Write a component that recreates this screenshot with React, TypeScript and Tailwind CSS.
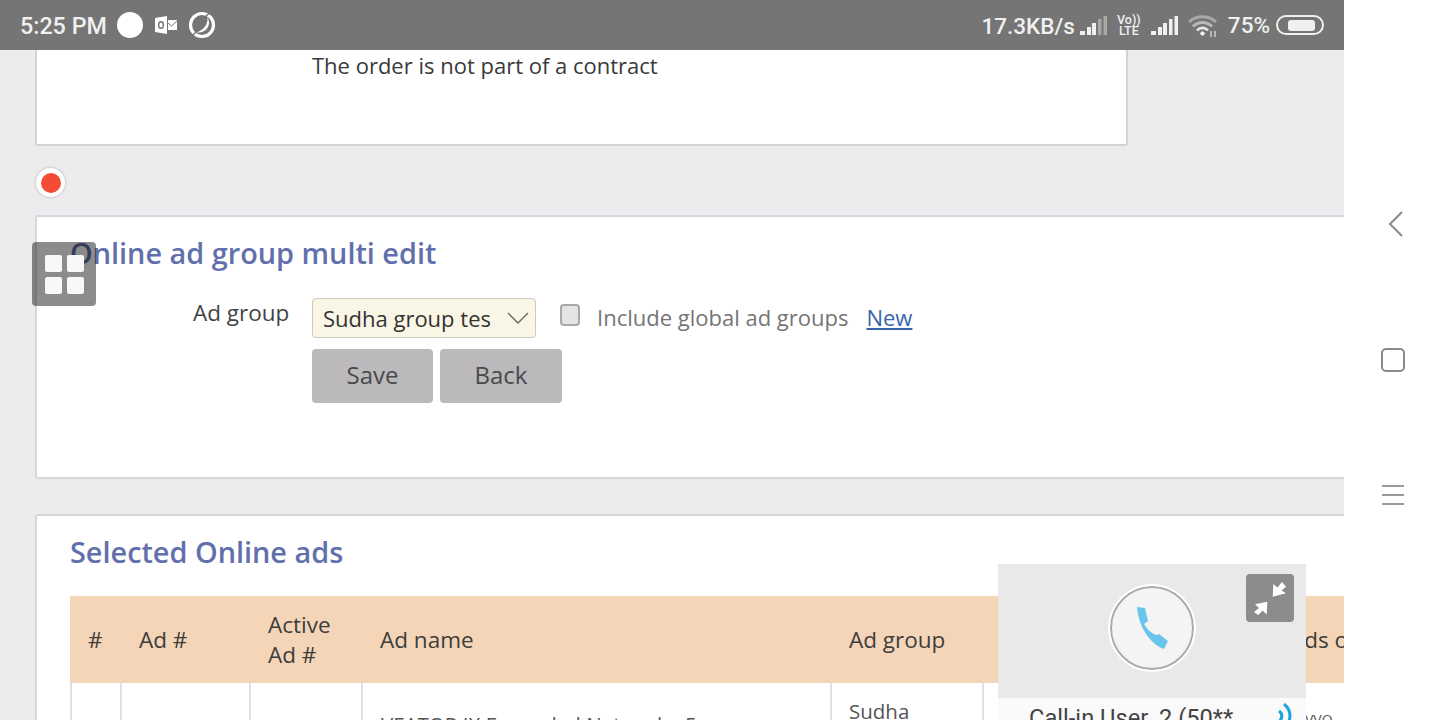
const openSans = "font-['Open_Sans',sans-serif]";

function SignalBars({ dim }: { dim?: boolean }) {
  const tail = dim ? "#a8a8a8" : "#f0f0f0";
  return (
    <svg width="28" height="20" viewBox="0 0 28 20">
      <rect x="0" y="15" width="5" height="4" fill="#f0f0f0" />
      <rect x="7" y="11" width="4" height="8" fill="#f0f0f0" />
      <rect x="12" y="7" width="4" height="12" fill="#f0f0f0" />
      <rect x="18" y="3" width="3.5" height="16" fill={tail} />
      <rect x="23.5" y="0" width="3.5" height="19" fill={tail} />
    </svg>
  );
}

function StatusBar() {
  return (
    <div className="h-[50px] shrink-0 bg-[#757575] flex items-center justify-between pl-5 pr-5 text-[#f0f0f0] font-['Roboto',sans-serif] font-medium text-[22.5px]">
      <div className="flex items-center">
        <span className="text-[23.3px] mt-[3px]">5:25 PM</span>
        <div className="ml-[10px] w-[26px] h-[26px] rounded-full bg-white" />
        <svg className="ml-[12px]" width="22" height="20" viewBox="0 0 22 20">
          <path d="M0 3 L12 1 V19 L0 17 Z" fill="#fff" />
          <ellipse cx="6" cy="10" rx="2.4" ry="3.2" fill="none" stroke="#757575" strokeWidth="1.4" />
          <path d="M13 5 H22 V15 H13 Z" fill="#fff" />
          <path d="M13 8 L16.5 11 L22 6" fill="none" stroke="#757575" strokeWidth="1" />
        </svg>
        <svg className="ml-[11px]" width="28" height="28" viewBox="0 0 28 28">
          <circle cx="14" cy="14" r="11.5" fill="none" stroke="#fff" strokeWidth="3.2" />
          <path d="M19.5 6.5 C24 14 18 22.5 8.5 21.5 C15 19.5 20 14 19.5 6.5 Z" fill="#fff" />
          <path d="M17 6 L22 1.5 M4 25 L8.5 20.5" stroke="#757575" strokeWidth="1.4" />
        </svg>
      </div>
      <div className="flex items-center">
        <span className="mt-[3px]">17.3KB/s</span>
        <div className="ml-[5px] mt-[2px]">
          <SignalBars dim />
        </div>
        <div className="ml-[9px] w-[24px] flex flex-col items-center text-[12.5px] leading-[11px] font-medium whitespace-nowrap">
          <span>Vo))</span>
          <span>LTE</span>
        </div>
        <div className="ml-[10px] mt-[2px]">
          <SignalBars />
        </div>
        <svg className="ml-[9px] mt-[2px]" width="30" height="22" viewBox="0 0 30 22">
          <path d="M1 7 C8 0 21 0 28 7" fill="none" stroke="#a8a8a8" strokeWidth="3" />
          <path d="M5 11.5 C10 6 19 6 24 11.5" fill="none" stroke="#b8b8b8" strokeWidth="3" />
          <path d="M9 15.5 C12 12 17 12 20 15.5" fill="none" stroke="#e8e8e8" strokeWidth="2.6" />
          <path d="M11.5 18.5 L14.5 16 L17.5 18.5 L14.5 21 Z" fill="#f0f0f0" />
          <path d="M23 22 V16 M27 22 V16" stroke="#d0d0d0" strokeWidth="1.5" />
        </svg>
        <span className="ml-[10px] mt-[2px]">75%</span>
        <div className="ml-[6px] w-[48px] h-[20px] rounded-full border-2 border-[#f0f0f0] flex items-center pl-[10px]">
          <div className="w-[27px] h-[11px] rounded-[3px] bg-[#f0f0f0]" />
        </div>
      </div>
    </div>
  );
}

const columns = [
  { label: "#", width: "w-[51px]" },
  { label: "Ad #", width: "w-[129px]" },
  { label: "Active Ad #", width: "w-[112px]" },
  { label: "Ad name", width: "w-[469px]" },
  { label: "Ad group", width: "w-[152px]" },
];

function AdsTable() {
  return (
    <div className="mt-[24px] w-[1400px] text-[#3d3d3d]">
      <div className="flex h-[87px] pt-[1px] bg-[#f4d5b8] text-[22.5px] leading-[30px]">
        {columns.map((c) => (
          <div key={c.label} className={`${c.width} pl-[18px] shrink-0 flex items-center`}>
            {c.label === "Active Ad #" ? (
              <span>
                Active
                <br />
                Ad #
              </span>
            ) : (
              c.label
            )}
          </div>
        ))}
        <div className="pl-[307px] flex items-center whitespace-nowrap">Ads o</div>
      </div>
      <div className="flex h-[60px] text-[20.5px] text-[#555]">
        <div className="w-[52px] shrink-0 border-x-2 border-[#e2e0e4]" />
        <div className="w-[129px] shrink-0 border-r-2 border-[#e2e0e4]" />
        <div className="w-[112px] shrink-0 border-r-2 border-[#e2e0e4]" />
        <div className="w-[469px] shrink-0 border-r-2 border-[#e2e0e4] pl-[18px] pt-[26px] whitespace-nowrap">
          VEATOR IX Expanded Network - 5
        </div>
        <div className="w-[152px] shrink-0 border-r-2 border-[#e2e0e4] pl-[17px] pt-[14px] leading-[28px]">Sudha</div>
        <div className="pl-[321px] pt-[26px] text-[14px]">VVO</div>
      </div>
    </div>
  );
}

export default function App() {
  return (
    <div className={`relative w-[1440px] h-[720px] overflow-hidden flex bg-white ${openSans}`}>
      <div className="w-[1344px] h-full flex flex-col overflow-hidden bg-[#eeebef]">
        <StatusBar />

        {/* top card, cut off by the status bar */}
        <div className="ml-[35px] w-[1093px] h-[96px] shrink-0 bg-white border-x-2 border-b-2 border-[#d4d4d6] rounded-b-[3px] pl-[275px] text-[22px] leading-[30px] text-[#3a3a3a]">
          The order is not part of a contract
        </div>

        {/* radio */}
        <div className="ml-[36px] mt-[22px] w-[29px] h-[29px] shrink-0 rounded-full bg-white shadow-[0_0_3px_#00000044] flex items-center justify-center">
          <div className="w-[20px] h-[20px] rounded-full bg-[#f44b37]" />
        </div>

        {/* multi edit card */}
        <div className="ml-[35px] mt-[18px] w-[1340px] h-[264px] shrink-0 bg-white border-2 border-[#d8d8dc] rounded-[3px] pl-[33px] pt-[16px]">
          <h2 className="text-[28.85px] leading-[40px] font-semibold text-[#6170ac] whitespace-nowrap">Online ad group multi edit</h2>
          <div className="flex mt-[25px]">
            <div className="w-[242px] pl-[123px] text-[22.5px] leading-[30px] text-[#444]">Ad group</div>
            <div className="flex flex-col">
              <div className="flex items-center">
                <div className="w-[224px] h-[40px] bg-[#faf6e6] border border-[#cfc9b8] rounded-[4px] flex items-center justify-between pl-[10px] pr-[6px] text-[22px] text-[#333]">
                  <span>Sudha group tes</span>
                  <svg width="22" height="12" viewBox="0 0 22 12">
                    <path d="M1 1 L11 11 L21 1" fill="none" stroke="#666" strokeWidth="1.4" />
                  </svg>
                </div>
                <div className="ml-[24px] w-[20px] h-[22px] -mt-[6px] rounded-[4px] bg-[#e4e3e6] border-2 border-[#a8a8a8]" />
                <span className="ml-[17px] pb-[2px] text-[22px] text-[#757575]">Include global ad groups</span>
                <span className="ml-[18px] pb-[2px] text-[22px] text-[#3763a8] underline">New</span>
              </div>
              <div className="flex gap-[7px] mt-[11px]">
                <div className="w-[121px] h-[54px] rounded-[4px] bg-[#bbb9bc] flex items-center justify-center pb-[2px] text-[24px] text-[#4a4a4a]">
                  Save
                </div>
                <div className="w-[122px] h-[54px] rounded-[4px] bg-[#bbb9bc] flex items-center justify-center pb-[2px] text-[24px] text-[#4a4a4a]">
                  Back
                </div>
              </div>
            </div>
          </div>
        </div>

        {/* selected ads card */}
        <div className="ml-[35px] mt-[35px] w-[1340px] h-[300px] shrink-0 bg-white border-2 border-[#d8d8dc] rounded-[3px] pl-[33px] pt-[16px]">
          <h2 className="text-[28.85px] leading-[40px] font-semibold text-[#6170ac] whitespace-nowrap">Selected Online ads</h2>
          <AdsTable />
        </div>
      </div>

      {/* android nav */}
      <div className="w-[96px] h-full flex flex-col items-center relative">
        <div className="mt-[210px] ml-[7px]">
          <svg width="16" height="28" viewBox="0 0 16 28">
            <path d="M14 2 L2 14 L14 26" fill="none" stroke="#8a8a8a" strokeWidth="2" />
          </svg>
        </div>
        <div className="mt-[110px] ml-[2px] w-[24px] h-[24px] rounded-[5px] border-2 border-[#8a8a8a]" />
        <div className="mt-[113px] ml-[2px] w-[22px] flex flex-col gap-[7px]">
          <div className="h-[2px] bg-[#9a9a9a]" />
          <div className="h-[2px] bg-[#9a9a9a]" />
          <div className="h-[2px] bg-[#9a9a9a]" />
        </div>
      </div>

      {/* floating grid button */}
      <div className="absolute left-[32px] top-[242px] w-[64px] h-[64px] rounded-[4px] bg-black/45 grid grid-cols-[17px_17px] grid-rows-[17px_17px] gap-[5px] p-[13px]">
        {[0, 1, 2, 3].map((i) => (
          <div key={i} className="rounded-[2px] bg-[#f8f8f8]" />
        ))}
      </div>

      {/* call widget */}
      <div className="absolute left-[998px] top-[564px] w-[308px] h-[156px] flex flex-col overflow-hidden">
        <div className="relative h-[134px] bg-[#e9e9e9] flex items-center justify-center shrink-0">
          <div className="w-[84px] h-[84px] -mt-[6px] rounded-full bg-[#f4f4f4] border-2 border-[#aaaaaa] outline-2 outline-white flex items-center justify-center">
            <svg width="33" height="42" viewBox="0 0 33 42">
              <path
                d="M1 0 L9 1 L12 14 L8 17 C11 22 15 26 20 28 L23 27 L32 34 L28 42 C15 37 3 22 1 0 Z"
                fill="#6ac5ec"
              />
            </svg>
          </div>
          <div className="absolute left-[248px] top-[10px] w-[48px] h-[48px] rounded-[4px] bg-[#8c8c8c] flex items-center justify-center">
            <svg width="34" height="35" viewBox="0 0 34 35">
              <path d="M19.7 15.7 L20.3 3 L24.5 6.5 L29 1 L33 5.7 L28.5 9.5 L33 12.3 Z" fill="#fff" />
              <path d="M14.3 20.7 L2 23.3 L6 27 L1 31 L5.3 34 L9.5 29.5 L13.7 33.5 Z" fill="#fff" />
            </svg>
          </div>
        </div>
        <div className="relative flex-1 bg-[#fafafa] pl-[31px] pt-[3px] font-['Roboto',sans-serif] text-[23.7px] leading-[34px] text-[#444] whitespace-nowrap">
          Call-in User_2 (50**
          <svg className="absolute left-[280px] top-[5px]" width="16" height="18" viewBox="0 0 16 18">
            <path d="M6 1 C12 6 13 12 11 18" fill="none" stroke="#1aa3dc" strokeWidth="3" />
            <path d="M1 8 C4 10 5 13 2 18" fill="none" stroke="#1aa3dc" strokeWidth="3" />
          </svg>
        </div>
      </div>
    </div>
  );
}
